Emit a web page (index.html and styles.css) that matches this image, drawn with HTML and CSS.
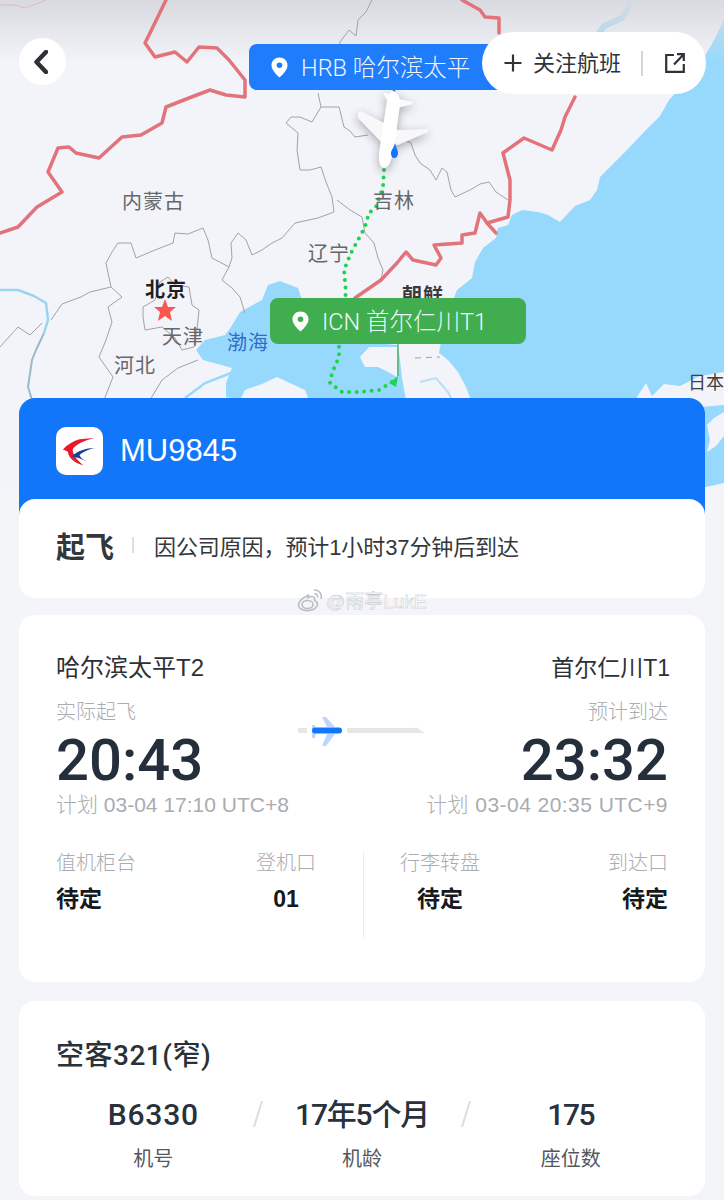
FILE: index.html
```html
<!DOCTYPE html>
<html lang="zh-CN">
<head>
<meta charset="utf-8">
<title>MU9845</title>
<link rel="stylesheet" href="styles.css">
</head>
<body>
<div class="page">
  <section class="map">
    <svg class="map-art" width="724" height="487" viewBox="0 0 724 487">
      <defs>
        <linearGradient id="topfade" x1="0" y1="0" x2="0" y2="1">
          <stop offset="0" stop-color="#d9dadf"/>
          <stop offset="1" stop-color="#d9dadf" stop-opacity="0"/>
        </linearGradient>
      </defs>
      <rect width="724" height="487" fill="#f3f4f9"/>
      <!-- open sea -->
      <path fill="#97d9fd" d="M724,20 L712,44 L692,77 L680,88 L669,100 L660,116 L646,130 L625,152 L600,177 L597,190 L590,200 L575,206 L560,222 L548,215 L538,212 L522,210 L512,215 L508,225 L498,228 L496,238 L483,248 L475,262 L472,278 L457,290 L445,320 L439,353 L448,360 L458,372 L466,387 L471,400 L490,487 L706,487 L724,483 Z"/>
      <!-- Bohai and Yellow Sea -->
      <path fill="#97d9fd" d="M231,327 L240,312 L262,300 L268,285 L280,281 L298,288 L302,300 L330,340 L398,345 L400,360 L402,378 L406,400 L412,420 L240,420 L240,400 L226,397 L226,383 L232,368 L203,360 L196,350 L205,340 L225,335 Z"/>
      <path fill="#f3f4f9" d="M240,400 L245,390 L262,384 L277,377 L292,384 L305,390 L309,400 L309,420 L240,420 Z"/>
      <path fill="#f3f4f9" d="M360,357 L369,347 L397,347 L397,377 L388,372 L378,367 L365,367 Z"/>
      <path fill="#f3f4f9" d="M724,372 L700,376 L680,386 L664,384 L652,396 L646,383 L637,397 L642,412 L724,405 Z"/>
      <path fill="#f3f4f9" d="M724,412 L714,418 L707,425 L710,440 L707,452 L716,446 L724,436 Z"/>
      <path fill="none" stroke="#97d9fd" stroke-width="6" stroke-linecap="round" d="M600,32 L604,26 L622,18 L628,8 L632,0"/>
      <path fill="none" stroke="#97d9fd" stroke-width="2.500" d="M231,373 L205,383 L185,398"/>
      <path fill="none" stroke="#b6def5" stroke-width="2" d="M420,382 L436,378 L448,392 L452,400"/>
      <path fill="none" stroke="#a2a2a6" stroke-width="1" stroke-dasharray="6 5" d="M415,358 L440,357"/>
      <rect width="724" height="62" fill="url(#topfade)"/>
      <!-- province borders -->
      <g fill="none" stroke="#a2a2a6" stroke-width="1" stroke-linejoin="round">
        <path d="M372,0 L366,12 L358,20 L356,36 L349,30 L340,42 L338,60"/>
        <path d="M318,93 L321,107 L339,107 L344,127 L350,131 L355,137 L368,135 M405,140 L411,143 L415,155 L420,163 L430,170 L436,180 L442,168 L447,172 L451,190 L455,197 L470,190 L480,184 L489,182 L496,192 L508,200"/>
        <path d="M321,107 L312,122 L300,117 L291,117 L286,123 L298,133 L297,150 L300,170 L310,170 L321,167 L326,182 L332,197 L334,212 L318,218 L295,223 L282,238 L272,243 L262,250 L252,255 L246,240 L238,233 L231,243 L232,258 L229,267 L222,280 L232,288 L240,297 L245,313"/>
        <path d="M337,200 L350,210 L362,217 L365,233 L374,243 L378,258 L383,270 L381,280"/>
        <path d="M229,267 L212,258 L208,240 L203,228 L188,234 L175,233 L173,243 L155,250 L136,258 L131,243 L118,243 L112,252 L106,263 L111,287 L90,292 L81,297 L62,304 L51,320"/>
        <path d="M111,287 L122,297 L108,307 L112,322 L106,340 L99,357 L113,377 L104,400"/>
        <path d="M143,307 L155,300 L160,282 L168,277 L175,285 L189,287 L192,305 L199,310 L197,330 L194,347 L182,350 L175,338 L162,327 L145,330 L143,317 Z"/>
        <path d="M198,360 L178,368 L162,380 L150,400"/>
        <path d="M0,347 L18,327 L30,335 L42,323"/>
      </g>
      <path fill="none" stroke="#9bd4f0" stroke-width="2.500" stroke-linejoin="round" d="M0,290 L18,290 L34,296 L46,303 L48,320 L44,333"/>
      <path fill="none" stroke="#9cb9c6" stroke-width="2" stroke-linejoin="round" d="M44,333 L36,350 L32,360 L28,387 L32,400"/>
      <!-- national borders -->
      <path fill="none" stroke="#dcbcc0" stroke-width="1" d="M0,5 L15,5 L25,8 L46,0"/>
      <g fill="none" stroke="#e2737b" stroke-width="3.500" stroke-linejoin="round" stroke-linecap="round">
        <path d="M166,0 L150,33 L145,43 L155,57 L175,52 L187,62 L199,47 L217,48 L229,60 L245,80 L245,97 L226,95 L210,90 L189,98 L166,107 L162,123 L141,135 L122,137 L99,158 L76,153 L69,147 L58,148 L48,172 L62,192 L37,207 L18,227 L0,233"/>
        <path d="M462,0 L480,10 L485,17 L499,18 L499,33 M575,97 L565,117 L561,130 L552,150 L524,138 L503,153 L510,180 L510,200 L508,217 L487,223 L480,213 L475,233 L462,235 L462,243 L434,245 L441,258 L436,265 L413,260 L406,252 L397,263 L381,280 L355,298"/>
        <path d="M487,223 L496,233"/>
      </g>
      <!-- route -->
      <path fill="none" stroke="#1fd24f" stroke-width="4" stroke-linecap="round" stroke-dasharray="0 7.500" d="M384,170 L383,187 L376,207 L369,213 L365,227 L358,240 L351,253 L344,270 L346,293 L340,320 L339,345 L339,357 L332,373 L330,383 L342,392 L360,392 L379,390 L392,382"/>
      <path fill="none" stroke="#3fae4e" stroke-width="1.200" d="M398,340 L398,376"/>
      <path fill="#1fd24f" d="M389,383 L398,376 L396,387 Z"/>
      <!-- star -->
      <path fill="#f9574f" d="M165,299 L168,307 L176,307 L170,312 L172,321 L165,316 L158,321 L160,312 L154,307 L162,307 Z"/>
      <!-- plane marker -->
      <path fill="none" stroke="#1276fb" stroke-width="2.400" d="M394,88 L394,96"/>
      <g class="plane">
        <path fill="#f8f8fa" d="M358,113 L361,111 L386,124 L398,130 L427,129 L428,132 L398,145 L382,143 L358,118 Z"/>
        <path fill="#fbfbfc" d="M383,93 L387,93 L395,98 L413,102 L413,104 L397,108 L390,106 Z"/>
        <path fill="#ffffff" d="M393,91 C398,92 401,98 400,105 L394,148 C392,160 389,167 385,168 C381,168 378,164 379,153 L387,100 C388,95 390,91 393,91 Z"/>
      </g>
      <path fill="#1276fb" d="M395,143 C396,148 398,150 398,153 C398,156 396,158 394.500,158 C392,158 391,156 391,153 C391,150 394,148 395,143 Z"/>
    </svg>

    <span class="place place-nm">内蒙古</span>
    <span class="place place-jl">吉林</span>
    <span class="place place-ln">辽宁</span>
    <span class="place capital">北京</span>
    <span class="place place-tj">天津</span>
    <span class="place place-hb">河北</span>
    <span class="place place-bh">渤海</span>
    <span class="place place-cx">朝鲜</span>
    <span class="place place-jp">日本</span>

    <button class="back" aria-label="返回">
      <svg width="14" height="24" viewBox="0 0 14 24"><path d="M12,2 L2.500,12 L12,22" fill="none" stroke="#2e3135" stroke-width="4.500" stroke-linecap="round" stroke-linejoin="round"/></svg>
    </button>

    <div class="tag tag-from">
      <svg class="pin" width="17" height="21" viewBox="0 0 18 23" preserveAspectRatio="none"><path fill="#fff" fill-rule="evenodd" d="M9,0.500 C13.800,0.500 17.500,4.200 17.500,9 C17.500,14 12.500,19 9,22.500 C5.500,19 0.500,14 0.500,9 C0.500,4.200 4.200,0.500 9,0.500 Z M9,6 A3,3 0 1 0 9,12 A3,3 0 1 0 9,6 Z"/></svg>
      <span>HRB 哈尔滨太平</span>
    </div>
    <div class="tag tag-to">
      <svg class="pin" width="17" height="21" viewBox="0 0 18 23" preserveAspectRatio="none"><path fill="#fff" fill-rule="evenodd" d="M9,0.500 C13.800,0.500 17.500,4.200 17.500,9 C17.500,14 12.500,19 9,22.500 C5.500,19 0.500,14 0.500,9 C0.500,4.200 4.200,0.500 9,0.500 Z M9,6 A3,3 0 1 0 9,12 A3,3 0 1 0 9,6 Z"/></svg>
      <span>ICN 首尔仁川T1</span>
    </div>

    <div class="follow">
      <svg width="18" height="18" viewBox="0 0 18 18"><path d="M9,0.500 V17.500 M0.500,9 H17.500" stroke="#2f3338" stroke-width="2.200" fill="none"/></svg>
      <span class="follow-text">关注航班</span>
      <i class="follow-sep"></i>
      <svg width="20" height="20" viewBox="0 0 20 20"><path d="M9,2 H1.200 V18.800 H18.800 V11 M9,11.500 L18.500,1.500 M12,1.200 H18.800 V8" fill="none" stroke="#2f3338" stroke-width="2.200"/></svg>
    </div>
  </section>

  <main class="cards">
    <section class="status-card">
      <header class="flight-head">
        <span class="logo">
          <svg width="47" height="48" viewBox="0 0 48 48">
            <path fill="#e8192c" d="M39,10.700 L24,12 C17,14 11,18 7,22.500 L12,24.500 C13,31 18,36 28,38.500 C22,34 17,28 17,22.500 C20,17 30,13 39,10.700 Z"/>
            <path fill="#1f3f92" d="M40,21 C30,21 22,24 16,29.500 C21,30 27,32 32,35 C28,33 25,30.500 24,28.500 C27,25 33,22.500 40,21 Z"/>
          </svg>
        </span>
        <span class="flight-no">MU9845</span>
      </header>
      <div class="status-body">
        <strong class="status-title">起飞</strong>
        <i class="status-sep"></i>
        <span class="status-text">因公司原因，预计1小时37分钟后到达</span>
      </div>
    </section>

    <section class="card route-card">
      <div class="route">
        <div class="end">
          <div class="airport">哈尔滨太平T2</div>
          <div class="muted">实际起飞</div>
          <div class="time">20:43</div>
          <div class="muted plan">计划 03-04 17:10 UTC+8</div>
        </div>
        <svg class="route-arrow" width="128" height="32" viewBox="0 0 128 32">
          <path fill="#e6e6e8" d="M0,11 H9 V16 H0 Z M49,11 H118 L116,9 L127,16 H49 Z"/>
          <path fill="#bcd7fb" d="M24,0 L28,0 L37,10 H29 Z M29,17 H37 L28,29 L24,29 Z M14,8 H17 L18,13 V16 L17,21 H14 Z"/>
          <rect x="14" y="10.500" width="30" height="6" rx="3" fill="#1276fb"/>
        </svg>
        <div class="end end-right">
          <div class="airport">首尔仁川T1</div>
          <div class="muted">预计到达</div>
          <div class="time">23:32</div>
          <div class="muted plan">计划 03-04 20:35 UTC+9</div>
        </div>
      </div>
      <div class="facts">
        <div class="fact-pair">
          <div class="fact"><span class="muted">值机柜台</span><b>待定</b></div>
          <div class="fact fact-center"><span class="muted">登机口</span><b>01</b></div>
        </div>
        <i class="facts-sep"></i>
        <div class="fact-pair">
          <div class="fact fact-center"><span class="muted">行李转盘</span><b>待定</b></div>
          <div class="fact fact-right"><span class="muted">到达口</span><b>待定</b></div>
        </div>
      </div>
    </section>

    <section class="card plane-card">
      <h2 class="plane-title">空客321(窄)</h2>
      <div class="specs">
        <div class="spec"><b class="spec-reg">B6330</b><span>机号</span></div>
        <i class="slash"></i>
        <div class="spec"><b class="spec-age">17年5个月</b><span>机龄</span></div>
        <i class="slash"></i>
        <div class="spec"><b class="spec-seats">175</b><span>座位数</span></div>
      </div>
    </section>
  </main>

  <div class="watermark">
    <svg width="26" height="24" viewBox="0 0 26 24"><g fill="none" stroke="#b9bcc2" stroke-width="1.600"><path d="M10,8 C5,10 1,14 1.500,17.500 C2,21 7,23 12,22.500 C17,22 21,19 20.500,15.500 C20,13.500 17.500,13 17.500,12 C18.500,9 16,7.500 11,9.500 C12,7 11.500,6.500 10,8 Z"/><ellipse cx="10.500" cy="16.500" rx="5.500" ry="4"/><path d="M17,2 C22,1.500 25.500,6 24,11 M17.500,6 C19.500,5.500 21,7.500 20.500,9.500"/></g></svg>
    <span>@雨亭LukE</span>
  </div>
</div>
</body>
</html>
```
FILE: styles.css
```css
* { box-sizing: border-box; }
html, body { margin: 0; padding: 0; }
body {
  background: #f3f5f9;
  font-family: "Liberation Sans", "Noto Sans CJK SC", sans-serif;
  color: #2b3138;
}
.page { position: relative; width: 724px; height: 1200px; overflow: hidden; }

/* Map */
.map { position: relative; height: 398px; }
.map-art { position: absolute; left: 0; top: 0; display: block; }
.plane { filter: drop-shadow(0 3px 5px rgba(70, 75, 90, .45)); }

.place {
  position: absolute;
  font-size: 20px;
  line-height: 22px;
  letter-spacing: 1px;
  color: #666769;
  white-space: nowrap;
}
.place-nm { left: 122px; top: 191px; }
.place-jl { left: 373px; top: 190px; }
.place-ln { left: 308px; top: 243px; }
.capital { left: 145px; top: 279px; color: #1f1f21; font-weight: 700; }
.place-tj { left: 162px; top: 326px; }
.place-hb { left: 114px; top: 355px; }
.place-bh { left: 227px; top: 332px; color: #2d6ec6; }
.place-cx { left: 402px; top: 285px; color: #3a3a3d; font-weight: 700; }
.place-jp { left: 688px; top: 372px; color: #3e3f42; font-size: 18px; letter-spacing: 0; }

.back {
  position: absolute;
  left: 19px;
  top: 38px;
  width: 47px;
  height: 47px;
  border: 0;
  padding: 0 3px 0 0;
  border-radius: 50%;
  background: #fff;
  display: flex;
  align-items: center;
  justify-content: center;
}

.tag {
  position: absolute;
  display: flex;
  align-items: center;
  height: 46px;
  border-radius: 8px;
  color: #eef6ff;
  font-family: "Roboto", "Noto Sans CJK SC", sans-serif;
  font-weight: 300;
  font-size: 23.5px;
  white-space: nowrap;
}
.tag span { padding-bottom: 2px; }
.tag-from { left: 249px; top: 44px; width: 260px; padding-left: 22px; gap: 13px; background: #1f7cfb; }
.tag-to { left: 270px; top: 298px; width: 256px; padding-left: 22px; gap: 13px; background: #40ae4f; }
.pin { flex: none; }

.follow {
  position: absolute;
  left: 482px;
  top: 32px;
  width: 224px;
  height: 62px;
  border-radius: 31px;
  background: #fff;
  display: flex;
  align-items: center;
  padding-left: 22px;
}
.follow-text { margin-left: 11px; padding-bottom: 4px; font-size: 22px; color: #2f3338; white-space: nowrap; }
.follow-sep { width: 2px; height: 25px; margin: 0 22px 0 20px; background: #d4d5d8; }

/* Cards */
.cards {
  position: relative;
  display: flex;
  flex-direction: column;
  gap: 19px;
  padding: 0 19px;
}
.status-card {
  height: 200px;
  border-radius: 16px 16px 0 0;
  background: linear-gradient(#1276fb 120px, transparent 120px);
  display: flex;
  flex-direction: column;
  margin-bottom: -2px;
}
.flight-head {
  height: 101px;
  flex: none;
  padding: 4px 0 0 37px;
  display: flex;
  align-items: center;
  gap: 17px;
}
.logo {
  width: 47px;
  height: 48px;
  border-radius: 10px;
  background: #fff;
  overflow: hidden;
}
.logo svg { display: block; }
.flight-no { font-size: 31px; color: #fff; }
.status-body {
  flex: 1;
  border-radius: 16px;
  background: #fff;
  display: flex;
  align-items: center;
  padding: 0 0 8px 37px;
}
.status-title { font-size: 29px; color: #33373c; }
.status-sep { width: 2px; height: 16px; margin: 0 20px 0 18px; background: #dedfe2; }
.status-text { font-size: 22px; color: #34383d; letter-spacing: -.1px; }

.card { border-radius: 16px; background: #fff; }
.route-card { height: 367px; padding: 36px 37px 0; }
.route { display: flex; justify-content: space-between; position: relative; }
.end { display: flex; flex-direction: column; }
.end-right { align-items: flex-end; }
.airport { font-size: 24px; line-height: 34px; color: #2c3138; }
.end-right .airport { font-size: 23px; margin-right: -2px; }
.muted { font-size: 20px; line-height: 28px; color: #a9acb0; font-weight: 300; }
.end .muted { margin-top: 13px; }
.time {
  font-family: "Roboto", "Liberation Sans", sans-serif;
  font-weight: 500;
  font-size: 58px;
  line-height: 60px;
  margin-top: 4px;
  color: #252f3b;
}
.end .plan { margin-top: 1px; font-size: 21px; white-space: nowrap; }
.end-right .plan { letter-spacing: .45px; }
.route-arrow { position: absolute; left: 242px; top: 66px; }

.facts { display: flex; margin-top: 30px; }
.fact-pair { flex: 1; display: flex; justify-content: space-between; }
.facts-sep { width: 1px; height: 86px; margin: 3px 36px 0 47px; background: #ececee; flex: none; }
.fact { display: flex; flex-direction: column; }
.fact b { font-size: 23px; line-height: 30px; margin-top: 7px; color: #16191d; }
.fact-center { align-items: center; }
.fact-right { align-items: flex-end; }
.fact-pair:first-child { flex: none; width: 260px; }

.plane-card { height: 195px; padding: 35px 37px 0; margin-bottom: 0; }
.plane-title {
  margin: 0;
  font-family: "Roboto", "Noto Sans CJK SC", sans-serif;
  font-size: 28px;
  line-height: 40px;
  font-weight: 500;
  letter-spacing: .5px;
  color: #2b3138;
}
.specs { display: flex; align-items: flex-start; margin: 19px -6px 0; }
.spec { flex: 1; display: flex; flex-direction: column; align-items: center; }
.spec b {
  font-family: "Roboto", "Noto Sans CJK SC", sans-serif;
  font-size: 30px;
  line-height: 40px;
  font-weight: 500;
  color: #28313c;
  white-space: nowrap;
}
.spec .spec-reg { letter-spacing: .8px; }
.spec .spec-age { letter-spacing: -1.2px; }
.spec .spec-seats { letter-spacing: -1.5px; }
.spec span { font-size: 20px; line-height: 28px; margin-top: 10px; color: #54585e; }
.slash { flex: none; width: 2px; height: 26px; margin-top: 6px; background: #dcdde0; transform: skewX(-17deg); }

.watermark {
  position: absolute;
  left: 297px;
  top: 586px;
  display: flex;
  align-items: center;
  gap: 3px;
  font-size: 19px;
  color: #fff;
  -webkit-text-stroke: 0.4px #b9bcc2;
  white-space: nowrap;
}
```
